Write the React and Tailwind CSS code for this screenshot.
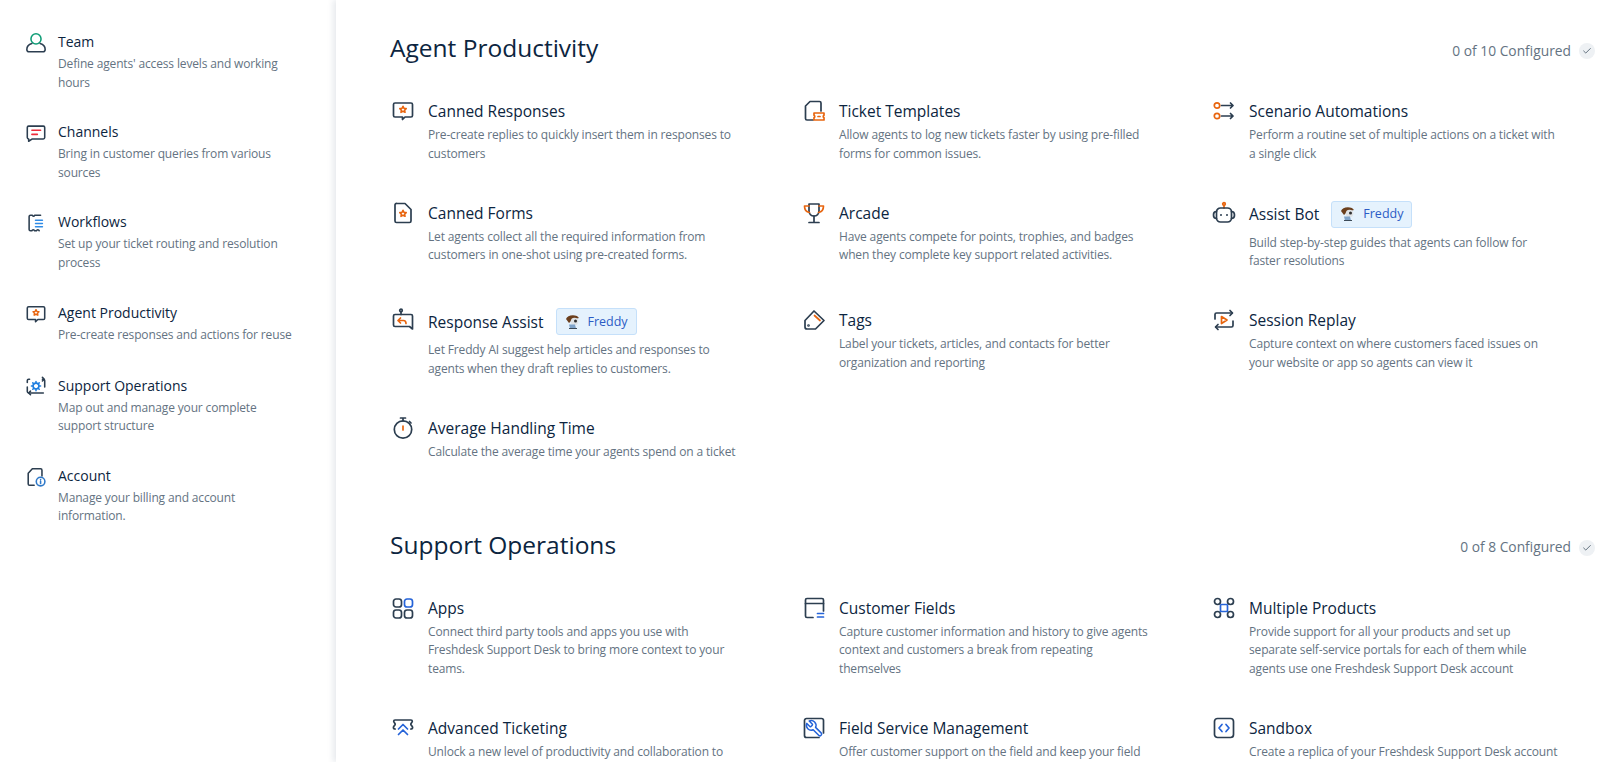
import React from 'react';
import { Check } from 'lucide-react';

const NAVY = '#2c3e50';
const ORANGE = '#e8650f';
const BLUE = '#2563d8';

const Svg = ({ children }) => (
    <svg width="24" height="24" viewBox="0 0 24 24" fill="none" stroke={NAVY} strokeWidth="1.7" strokeLinecap="round" strokeLinejoin="round">
        {children}
    </svg>
);

const Star = ({ x, y }) => (
    <path d={`M${x} ${y - 3.2}l1 2 2.2.3-1.6 1.5.4 2.2-2-1-2 1 .4-2.2-1.6-1.5 2.2-.3z`} stroke={ORANGE} strokeWidth="1.6" />
);

const icons = {
    team: (
        <Svg>
            <circle cx="12" cy="7.500" r="5.500" stroke="#0f9d76" />
            <path d="M7.500 12.500C4 13.500 2 16 2 19c0 1.800 1 2.500 2.500 2.500h15c1.500 0 2.500-.7 2.500-2.500 0-3-2-5.500-5.500-6.500" />
        </Svg>
    ),
    channels: (
        <Svg>
            <path d="M4 4.500h16a1.500 1.500 0 0 1 1.500 1.500v11a1.500 1.500 0 0 1-1.500 1.500H8l-4 2.500v-2.500A1.500 1.500 0 0 1 2.500 17V6A1.500 1.500 0 0 1 4 4.500z" />
            <path d="M7.500 9h9.500" stroke="#ee2b3b" />
            <path d="M7.500 13.500h6" stroke="#ee2b3b" />
        </Svg>
    ),
    workflows: (
        <Svg>
            <path d="M6 3.500h2c.3 1.500 2 1.500 2.500 0H17M6 3.500c-.8 0-1.500.7-1.500 1.500v14c0 .8.700 1.500 1.500 1.500h1.500c.5-1.500 2.500-1.500 3 0h2c.5-1.500 2.500-1.500 3 0" />
            <path d="M11.500 9H19M11.500 12.500H19M11.500 16H19" stroke="#2f8be6" />
        </Svg>
    ),
    speechStar: (
        <Svg>
            <path d="M4 4h16a1.500 1.500 0 0 1 1.500 1.500v11a1.500 1.500 0 0 1-1.500 1.500h-6l-2.500 2.500V18H4a1.500 1.500 0 0 1-1.500-1.500v-11A1.500 1.500 0 0 1 4 4z" />
            <Star x={12} y={10.5} />
        </Svg>
    ),
    supportOps: (
        <Svg>
            <path d="M5 3.500H4A1.500 1.500 0 0 0 2.500 5v2M19 3.500h1A1.500 1.500 0 0 1 21.500 5v7M2.500 12v5A1.500 1.500 0 0 0 4 18.500h16" />
            <path d="M6 16.500l-2 2 2 2M19 1.500l2 2-2 2" />
            <circle cx="12" cy="11" r="3.200" stroke="#1f7fe0" />
            <path d="M12 6v1.800M12 14.200V16M7 11h1.800M15.200 11H17M8.500 7.500l1.200 1.200M14.300 13.300l1.200 1.200M15.500 7.500l-1.200 1.200M9.700 13.300l-1.200 1.200" stroke="#1f7fe0" />
        </Svg>
    ),
    account: (
        <Svg>
            <path d="M10 21H5a1.500 1.500 0 0 1-1.500-1.500V8L8 3h9a1.500 1.500 0 0 1 1.500 1.500V11" />
            <circle cx="17" cy="17" r="4.700" stroke="#2f79c9" />
            <path d="M17 14.800v.1M17 16.700v2.400" stroke="#2f79c9" />
        </Svg>
    ),
    formStar: (
        <Svg>
            <path d="M6 2.500h8l6 6V20a1.500 1.500 0 0 1-1.500 1.500h-13A1.500 1.500 0 0 1 4 20V4a1.500 1.500 0 0 1 2-1.500z" />
            <Star x={12} y={12.500} />
        </Svg>
    ),
    assistReply: (
        <Svg>
            <circle cx="10" cy="2.500" r="1.300" />
            <path d="M10 3.800V6.500" />
            <path d="M4 6.500h16a1.500 1.500 0 0 1 1.500 1.500v13l-3-2.500H4A1.500 1.500 0 0 1 2.500 17V8A1.500 1.500 0 0 1 4 6.500z" />
            <path d="M9.500 10l-2.500 2.500 2.500 2.500M7 12.500h5.500c1.500 0 2.500 1 2.500 3" stroke={ORANGE} />
        </Svg>
    ),
    timer: (
        <Svg>
            <circle cx="12" cy="13.500" r="8.700" />
            <path d="M9.500 2h5M12 2v3M18.500 5.500l1.500 1.500" />
            <path d="M12 10v4" stroke={ORANGE} />
        </Svg>
    ),
    ticketTemplate: (
        <Svg>
            <path d="M11 21H5a1.500 1.500 0 0 1-1.500-1.500V7L8 2.500h9.500A1.500 1.500 0 0 1 19 4v8" />
            <path d="M12 14h10v2.200a1.500 1.500 0 0 0 0 2.600V21H12v-2.200a1.500 1.500 0 0 0 0-2.600z" stroke={ORANGE} />
            <path d="M16 17.500h2" stroke={ORANGE} />
        </Svg>
    ),
    trophy: (
        <Svg>
            <path d="M7 3h10v7c0 3-2.200 5-5 5s-5-2-5-5z" />
            <path d="M7 5H2.500c0 3.500 1.500 6 5 6.500M17 5h4.500c0 3.500-1.500 6-5 6.500" stroke={ORANGE} />
            <path d="M12 15v6M7 21.500h10" />
        </Svg>
    ),
    tag: (
        <Svg>
            <path d="M3 12.500l9-9.500 10 9.500-8.500 8.500H5a2 2 0 0 1-2-2z" />
            <circle cx="6.500" cy="17.500" r=".5" />
            <path d="M12.500 7.500l5.500 5" stroke={ORANGE} />
        </Svg>
    ),
    scenario: (
        <Svg>
            <circle cx="5" cy="6.500" r="2.700" stroke={ORANGE} />
            <circle cx="5" cy="17" r="2.700" stroke={ORANGE} />
            <path d="M9.500 6.500H21M18.500 4l2.500 2.500-2.500 2.500M9.500 17H21M18.500 14.500L21 17l-2.500 2.500" />
        </Svg>
    ),
    bot: (
        <Svg>
            <circle cx="12" cy="3" r="1.300" stroke={ORANGE} />
            <path d="M12 4.300V7" stroke={ORANGE} />
            <rect x="4.500" y="7" width="15" height="14" rx="4" />
            <path d="M4.500 10.500c-2.500 0-3 1.500-3 3.500s.5 3.500 3 3.500M19.500 10.500c2.500 0 3 1.500 3 3.500s-.5 3.500-3 3.500" />
            <path d="M9 14v.1M15 14v.1" strokeWidth="2" />
        </Svg>
    ),
    replay: (
        <Svg>
            <path d="M20 5H4.500A1.500 1.500 0 0 0 3 6.500V11M4 19h15.500a1.500 1.500 0 0 0 1.500-1.500V13" />
            <path d="M18 2.500L20.500 5 18 7.500M6 16.500L3.500 19 6 21.500" />
            <path d="M9.500 8.500l5.500 3.500-5.500 3.500z" stroke={ORANGE} />
        </Svg>
    ),
    apps: (
        <Svg>
            <rect x="2.500" y="3" width="8" height="8" rx="2.500" />
            <rect x="13.500" y="3" width="8" height="8" rx="2.500" stroke={BLUE} />
            <rect x="2.500" y="14" width="8" height="8" rx="2.500" />
            <rect x="13.500" y="14" width="8" height="8" rx="2.500" />
        </Svg>
    ),
    advanced: (
        <Svg>
            <path d="M4 4h16c.8 0 1.300.6 1.300 1.200 0 1.500-1.500 1.800-1.500 3 0 1.200 1.800 1.800 1.800 3.300 0 1-1 1.500-1.800 1.500M4 4c-.8 0-1.300.6-1.300 1.200 0 1.500 1.500 1.800 1.500 3 0 1.200-1.800 1.800-1.800 3.300 0 1 1 1.500 1.800 1.500" />
            <path d="M7.500 13L12 8.500l4.500 4.500M7.500 18.500L12 14l4.500 4.500" stroke={BLUE} />
        </Svg>
    ),
    fields: (
        <Svg>
            <path d="M11 21.500H5A1.500 1.500 0 0 1 3.500 20V4A1.500 1.500 0 0 1 5 2.500h15A1.500 1.500 0 0 1 21.500 4v11" />
            <path d="M3.500 7.500h18" />
            <path d="M15.500 17.500h6M15.500 21h6" stroke={BLUE} />
        </Svg>
    ),
    fieldService: (
        <Svg>
            <path d="M17 21.500H4.500a2 2 0 0 1-2-2v-15a2 2 0 0 1 2-2h15a2 2 0 0 1 2 2V17" />
            <path
                transform="translate(22 3) scale(-0.8 0.8)"
                stroke={BLUE}
                strokeWidth="1.900"
                d="M14.700 6.300a1 1 0 0 0 0 1.400l1.600 1.600a1 1 0 0 0 1.400 0l3.770-3.770a6 6 0 0 1-7.940 7.940l-6.910 6.910a2.120 2.120 0 0 1-3-3l6.910-6.910a6 6 0 0 1 7.940-7.940l-3.760 3.760z"
            />
        </Svg>
    ),
    products: (
        <Svg>
            <circle cx="5.500" cy="5.500" r="3" />
            <circle cx="18.500" cy="5.500" r="3" />
            <circle cx="5.500" cy="18.500" r="3" />
            <circle cx="18.500" cy="18.500" r="3" />
            <rect x="8.500" y="8.500" width="7" height="7" rx="1" stroke={BLUE} />
        </Svg>
    ),
    sandbox: (
        <Svg>
            <rect x="2.500" y="2.500" width="19" height="19" rx="3" />
            <path d="M10 8.500L7 12l3 3.500M14 8.500l3 3.500-3 3.500" stroke={BLUE} />
        </Svg>
    ),
};

const navItems = [
    { icon: 'team', title: 'Team', desc: "Define agents' access levels and working hours" },
    { icon: 'channels', title: 'Channels', desc: 'Bring in customer queries from various sources' },
    { icon: 'workflows', title: 'Workflows', desc: 'Set up your ticket routing and resolution process' },
    { icon: 'speechStar', title: 'Agent Productivity', desc: 'Pre-create responses and actions for reuse' },
    { icon: 'supportOps', title: 'Support Operations', desc: 'Map out and manage your complete support structure' },
    { icon: 'account', title: 'Account', desc: 'Manage your billing and account information.' },
];

const productivity = [
    { icon: 'speechStar', title: 'Canned Responses', desc: 'Pre-create replies to quickly insert them in responses to customers' },
    { icon: 'ticketTemplate', title: 'Ticket Templates', desc: 'Allow agents to log new tickets faster by using pre-filled forms for common issues.' },
    { icon: 'scenario', title: 'Scenario Automations', desc: 'Perform a routine set of multiple actions on a ticket with a single click' },
    { icon: 'formStar', title: 'Canned Forms', desc: 'Let agents collect all the required information from customers in one-shot using pre-created forms.' },
    { icon: 'trophy', title: 'Arcade', desc: 'Have agents compete for points, trophies, and badges when they complete key support related activities.' },
    { icon: 'bot', title: 'Assist Bot', badge: true, desc: 'Build step-by-step guides that agents can follow for faster resolutions' },
    { icon: 'assistReply', title: 'Response Assist', badge: true, desc: 'Let Freddy AI suggest help articles and responses to agents when they draft replies to customers.' },
    { icon: 'tag', title: 'Tags', desc: 'Label your tickets, articles, and contacts for better organization and reporting' },
    { icon: 'replay', title: 'Session Replay', desc: 'Capture context on where customers faced issues on your website or app so agents can view it' },
    { icon: 'timer', title: 'Average Handling Time', desc: 'Calculate the average time your agents spend on a ticket' },
];

const operations = [
    { icon: 'apps', title: 'Apps', desc: 'Connect third party tools and apps you use with Freshdesk Support Desk to bring more context to your teams.' },
    { icon: 'fields', title: 'Customer Fields', desc: 'Capture customer information and history to give agents context and customers a break from repeating themselves' },
    { icon: 'products', title: 'Multiple Products', desc: 'Provide support for all your products and set up separate self-service portals for each of them while agents use one Freshdesk Support Desk account' },
    { icon: 'advanced', title: 'Advanced Ticketing', desc: 'Unlock a new level of productivity and collaboration to' },
    { icon: 'fieldService', title: 'Field Service Management', desc: 'Offer customer support on the field and keep your field' },
    { icon: 'sandbox', title: 'Sandbox', desc: 'Create a replica of your Freshdesk Support Desk account' },
];

const FreddyBadge = () => (
    <span className="ml-[12px] flex h-[27px] w-[81px] items-center gap-[7px] rounded-[3px] border border-[#c5e0fa] bg-[#e5f2fd] pl-[8px] text-[12.5px] font-medium text-[#2c5cc5]">
        <svg width="16" height="16" viewBox="0 0 16 16" className="shrink-0">
            <path d="M1 5c1-3 6-5 11-3l2 2-4 1-3 1-3 3z" fill="#6b3f1d" />
            <circle cx="9.500" cy="7.500" r="3.800" fill="#dfe3e6" />
            <circle cx="10.500" cy="7" r="1.500" fill="#2f2f2f" />
            <path d="M4 10.500h6l1 4H5z" fill="#7fa3c9" />
            <path d="M4 14.500h8" stroke="#3c4a57" strokeWidth="1" />
        </svg>
        Freddy
    </span>
);

const Card = ({ item }) => (
    <div className="flex">
        <div className="w-[38px] shrink-0 pl-px">{icons[item.icon]}</div>
        <div>
            <div className="flex items-center">
                <h3 className="text-[15.5px] leading-6 text-[#0c2540]">{item.title}</h3>
                {item.badge && <FreddyBadge />}
            </div>
            <p className={`${item.badge ? 'mt-[6px]' : 'mt-[3px]'} w-[312px] text-[12px] leading-[18.6px] tracking-[-0.15px] text-[#647382]`}>{item.desc}</p>
        </div>
    </div>
);

const Section = ({ title, count, items, gridClass }) => (
    <section>
        <div className="mb-[35px] flex h-8 items-center justify-between pr-[5px]">
            <h2 className="text-[24.5px] leading-8 text-[#0c2540]">{title}</h2>
            <div className="flex items-center gap-2 pt-[6px] text-[13.8px] text-[#647382]">
                {count}
                <span className="flex h-4 w-4 items-center justify-center rounded-full bg-[#eef1f4]">
                    <Check size={10} strokeWidth={2} color="#475867" />
                </span>
            </div>
        </div>
        <div className={`grid grid-cols-[411px_410px_1fr] ${gridClass}`}>
            {items.map((item) => (
                <Card key={item.title} item={item} />
            ))}
        </div>
    </section>
);

const App = () => {
    return (
        <div className="flex h-[762px] overflow-hidden bg-white font-['Open_Sans',sans-serif]">
            {/* Settings nav */}
            <aside className="flex w-[336px] shrink-0 flex-col gap-[29px] pl-[25px] pt-[31px]">
                {navItems.map((item) => (
                    <div key={item.title} className="flex">
                        <div className="w-[33px] shrink-0 pt-px [&>svg]:h-[22px] [&>svg]:w-[22px]">{icons[item.icon]}</div>
                        <div className="w-[240px]">
                            <h4 className="text-[14px] leading-[22px] text-[#0c2540]">{item.title}</h4>
                            <p className="mt-[2px] min-h-[20px] text-[12px] leading-[18.6px] tracking-[-0.15px] text-[#647382]">{item.desc}</p>
                        </div>
                    </div>
                ))}
            </aside>

            {/* Main panel */}
            <main className="flex-1 overflow-hidden pl-[54px] pt-8 shadow-[-3px_0_6px_rgba(18,52,77,0.1)]">
                <Section title="Agent Productivity" count="0 of 10 Configured" items={productivity} gridClass="gap-y-[37.5px]" />
                <div className="mt-[67px]">
                    <Section title="Support Operations" count="0 of 8 Configured" items={operations} gridClass="gap-y-[38px]" />
                </div>
            </main>
        </div>
    );
};

export default App;
